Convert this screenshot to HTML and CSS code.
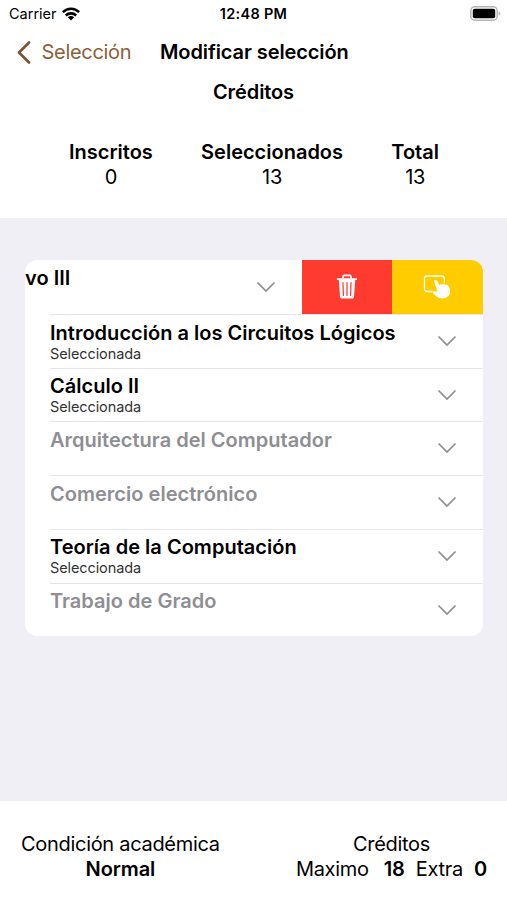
FILE: index.html
```html
<!DOCTYPE html>
<html lang="es">
<head>
    <meta charset="UTF-8">
    <meta name="viewport" content="width=device-width, initial-scale=1.0">
    <title>Modificar selección</title>
    <link rel="stylesheet" href="styles.css">
</head>
<body>
    <svg width="0" height="0" class="sprite">
        <symbol id="chevron" viewBox="0 0 20 12">
            <path d="M1.5 1.5 L10 10 L18.5 1.5" fill="none" stroke="#8e8e93" stroke-width="1.7"/>
        </symbol>
    </svg>

    <header class="header">
        <div class="status-bar">
            <div class="carrier">
                <span>Carrier</span>
                <svg class="wifi" viewBox="0 0 18 14">
                    <g fill="none" stroke="#000" stroke-width="2.6">
                        <path d="M0.9 5.2 C5.4 0.6 12.6 0.6 17.1 5.2"/>
                        <path d="M3.8 8.5 C6.7 5.7 11.3 5.7 14.2 8.5"/>
                    </g>
                    <path d="M5.9 10.3 C7.7 8.7 10.3 8.7 12.1 10.3 L9 13.5 Z"/>
                </svg>
            </div>
            <span class="time">12:48 PM</span>
            <svg class="battery" viewBox="0 0 31 15">
                <rect x="0.8" y="0.8" width="26.4" height="13.4" rx="4" fill="#fff" stroke="#b5b5b5" stroke-width="1.5"/>
                <rect x="2.8" y="2.8" width="22.4" height="9.4" rx="2"/>
                <path d="M28.6 5.2 C30.8 6 30.8 9 28.6 9.8 Z" fill="#b5b5b5"/>
            </svg>
        </div>

        <nav class="nav-bar">
            <a class="back">
                <svg viewBox="0 0 15 24">
                    <path d="M13 1.5 L3 11.5 L13 21.5" fill="none" stroke="#7d5233" stroke-width="2.7" stroke-linecap="round" stroke-linejoin="round"/>
                </svg>
                <span>Selección</span>
            </a>
            <h1 class="title">Modificar selección</h1>
        </nav>

        <h2 class="subtitle">Créditos</h2>
        <div class="summary">
            <div><b>Inscritos</b><span>0</span></div>
            <div><b>Seleccionados</b><span>13</span></div>
            <div><b>Total</b><span>13</span></div>
        </div>
    </header>

    <main class="content">
        <ul class="course-list">
            <li class="course swiped">
                <div class="cell">
                    <div class="name">vo III</div>
                    <svg class="chevron"><use href="#chevron"/></svg>
                </div>
                <button class="action delete" aria-label="Eliminar">
                    <svg width="22" height="26" viewBox="0 0 22 26">
                        <path d="M7 4.5 V2.8 Q7 1.4 8.4 1.4 H13.6 Q15 1.4 15 2.8 V4.5" fill="none" stroke="#fff" stroke-width="1.6"/>
                        <path d="M1.6 5.1 H20.4" stroke="#fff" stroke-width="1.7" stroke-linecap="round"/>
                        <path d="M2.8 6 H19.2 L18 22.7 Q17.8 24.6 15.9 24.6 H6.1 Q4.2 24.6 4 22.7 Z" fill="#fff"/>
                        <path d="M7 8.7 L7.4 21.4 M11 8.7 V21.4 M15 8.7 L14.6 21.4" fill="none" stroke="#ff3b30" stroke-width="1.25" stroke-linecap="round"/>
                    </svg>
                </button>
                <button class="action select" aria-label="Seleccionar">
                    <svg width="28" height="26" viewBox="0 0 28 26">
                        <path d="M9.5 17.5 H4 Q1.5 17.5 1.5 14.7 V4.8 Q1.5 2 4 2 H18.7 Q21.3 2 21.3 4.8 V8.5" fill="none" stroke="#fff" stroke-width="1.3"/>
                        <path d="M10.9 6.8 Q12.2 5.2 13.9 6.8 L16.6 11.6 Q16.8 10.3 17.8 10.3 Q18.9 10.2 19.4 11.2 Q19.8 9.6 21 9.8 Q22.1 9.9 22.5 11.2 Q23.5 10 24.6 10.9 Q26.4 12.2 27 16.6 Q27.5 20.5 24.6 22.8 Q20.8 25.2 16.6 24 Q14.8 23.5 12.5 21.4 L10.3 19.5 Q9.3 18.2 10.5 17.4 Q11.6 16.8 14.6 17.8 Z" fill="#fff"/>
                    </svg>
                </button>
            </li>
            <li class="course">
                <div class="cell">
                    <div><div class="name">Introducción a los Circuitos Lógicos</div><div class="state">Seleccionada</div></div>
                    <svg class="chevron"><use href="#chevron"/></svg>
                </div>
            </li>
            <li class="course">
                <div class="cell">
                    <div><div class="name">Cálculo II</div><div class="state">Seleccionada</div></div>
                    <svg class="chevron"><use href="#chevron"/></svg>
                </div>
            </li>
            <li class="course disabled">
                <div class="cell">
                    <div class="name">Arquitectura del Computador</div>
                    <svg class="chevron"><use href="#chevron"/></svg>
                </div>
            </li>
            <li class="course disabled">
                <div class="cell">
                    <div class="name">Comercio electrónico</div>
                    <svg class="chevron"><use href="#chevron"/></svg>
                </div>
            </li>
            <li class="course">
                <div class="cell">
                    <div><div class="name">Teoría de la Computación</div><div class="state">Seleccionada</div></div>
                    <svg class="chevron"><use href="#chevron"/></svg>
                </div>
            </li>
            <li class="course disabled">
                <div class="cell">
                    <div class="name">Trabajo de Grado</div>
                    <svg class="chevron"><use href="#chevron"/></svg>
                </div>
            </li>
        </ul>
    </main>

    <footer class="footer">
        <div class="condition">
            <span>Condición académica</span>
            <b>Normal</b>
        </div>
        <div class="credits">
            <span>Créditos</span>
            <div class="limits"><span>Maximo</span><b class="max">18</b><span>Extra</span><b class="extra">0</b></div>
        </div>
    </footer>
</body>
</html>
```

FILE: styles.css
```css
* {
    box-sizing: border-box;
}

body {
    margin: 0;
    height: 900px;
    display: flex;
    flex-direction: column;
    font-family: Inter, "Liberation Sans", sans-serif;
    font-size: 20px;
    line-height: 25px;
    letter-spacing: -0.3px;
    color: #000;
    background-color: #f0eff5;
    overflow: hidden;
}

b, h1, h2 {
    font-weight: 600;
    letter-spacing: -0.1px;
}

.sprite {
    display: none;
}

.header {
    height: 218px;
    background-color: #fff;
}

.status-bar {
    height: 27px;
    display: grid;
    grid-template-columns: 1fr auto 1fr;
    align-items: center;
    padding: 0 6px 0 9px;
    font-size: 14.5px;
    letter-spacing: 0;
}

.carrier {
    display: flex;
    align-items: center;
    gap: 5px;
}

.wifi {
    width: 18px;
    height: 14px;
}

.time {
    font-weight: 600;
    letter-spacing: 0.3px;
    margin-right: 3px;
}

.battery {
    width: 31px;
    height: 15px;
    justify-self: end;
}

.nav-bar {
    height: 51px;
    display: flex;
    align-items: center;
    padding-left: 16px;
}

.back {
    width: 144px;
    display: flex;
    align-items: center;
    gap: 10.5px;
    color: #8b6039;
}

.back svg {
    width: 15px;
    height: 24px;
}

.title, .subtitle {
    margin: 0;
    font-size: 20px;
}

.subtitle {
    margin-top: 2px;
    text-align: center;
}

.summary {
    display: flex;
    justify-content: space-between;
    margin-top: 35px;
    padding: 0 68px 0 69px;
}

.summary > div {
    display: flex;
    flex-direction: column;
    align-items: center;
}

.summary b {
    letter-spacing: 0;
}

.content {
    flex: 1;
    padding: 42.4px 24.5px 0 25px;
}

.course-list {
    list-style: none;
    margin: 0;
    padding: 0;
    border-radius: 12px;
    background-color: #fff;
    overflow: hidden;
}

.course {
    height: 53.7px;
    display: flex;
    padding-left: 25px;
}

.cell {
    flex: 1;
    display: flex;
    justify-content: space-between;
    padding: 5.5px 26px 0 0;
    border-top: 1px solid #e6e6e8;
}

.name {
    font-weight: 600;
    letter-spacing: 0.02px;
    white-space: nowrap;
}

.disabled .name {
    color: #8e8e93;
}

.state {
    font-size: 14.5px;
    line-height: 16px;
    letter-spacing: -0.1px;
    color: #333;
}

.chevron {
    width: 20px;
    height: 12px;
    margin-top: 14.5px;
}

/* first row is pulled left, showing its actions */
.swiped {
    padding-left: 0;
}

.swiped .cell {
    padding-top: 5px;
    border-top-color: transparent;
}

.action {
    width: 90.5px;
    padding: 0;
    border: none;
    display: flex;
    align-items: center;
    justify-content: center;
}

.delete {
    background-color: #ff3b30;
}

.select {
    background-color: #ffcc00;
}

.footer {
    height: 99px;
    display: flex;
    justify-content: space-between;
    padding: 31px 20px 0 21px;
    background-color: #fff;
}

.condition, .credits {
    display: flex;
    flex-direction: column;
    align-items: center;
}

.limits {
    display: flex;
}

.max {
    margin: 0 11px 0 15px;
}

.extra {
    margin-left: 11px;
}
```
